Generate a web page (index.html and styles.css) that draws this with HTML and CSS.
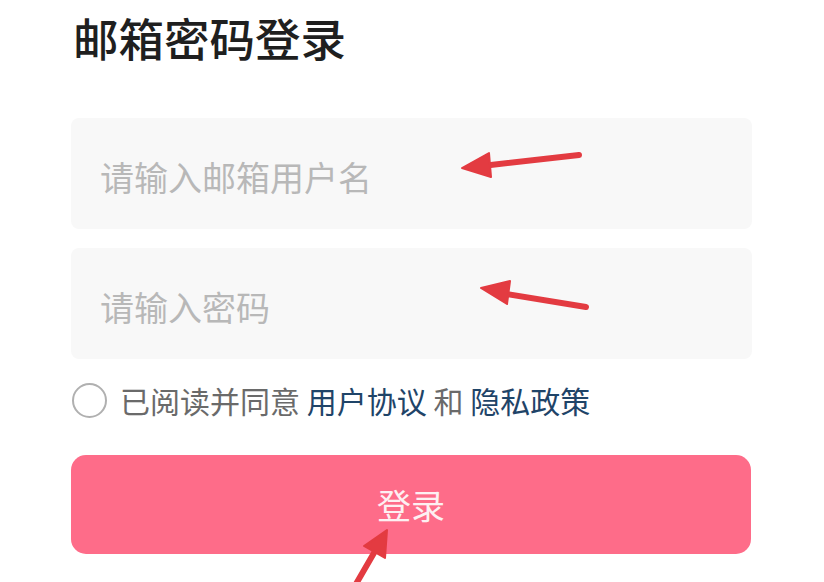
FILE: index.html
```html
<!DOCTYPE html>
<html lang="zh-CN">
<head>
  <meta charset="UTF-8">
  <meta name="viewport" content="width=device-width, initial-scale=1.0">
  <title>邮箱密码登录</title>
  <link rel="stylesheet" href="styles.css">
</head>
<body>

<div class="page">
  <h1>邮箱密码登录</h1>

  <!-- email + password fields -->
  <div class="field">
    <input type="text" placeholder="请输入邮箱用户名">
  </div>
  <div class="field">
    <input type="password" placeholder="请输入密码">
  </div>

  <!-- agreement -->
  <label class="agree">
    <span class="radio"></span>
    <span>已阅读并同意 <a href="#">用户协议</a> 和 <a href="#">隐私政策</a></span>
  </label>

  <button class="login">登录</button>

  <!-- red annotation arrows drawn over the screenshot -->
  <svg class="marks" width="824" height="582" viewBox="0 0 824 582">
    <g fill="#e33b41" stroke="#e33b41" stroke-linecap="round" stroke-linejoin="round">
      <line x1="579" y1="155" x2="482" y2="166" stroke-width="6"/>
      <polygon points="462,168 489,153 491,177" stroke-width="2"/>

      <line x1="586" y1="307" x2="500" y2="293" stroke-width="6"/>
      <polygon points="481,288 510,281 507,304" stroke-width="2"/>

      <line x1="356" y1="584" x2="378" y2="546" stroke-width="6"/>
      <polygon points="387,530 385,558 364,546" stroke-width="2"/>
    </g>
  </svg>
</div>

</body>
</html>
```

FILE: styles.css
```css
body {
  margin: 0;
  background-color: #fff;
  font-family: "Noto Sans CJK SC", "Noto Sans", sans-serif;
}
.page {
  position: relative;
  width: 824px;
  height: 582px;
  box-sizing: border-box;
  padding: 11px 72px 0 71px;
  overflow: hidden;
}
h1 {
  margin: 0 0 54px 2px;
  font-size: 45.5px;
  line-height: 53px;
  font-weight: 500;
  color: #1f1f1f;
}
.field {
  height: 111px;
  margin-bottom: 19px;
  background-color: #f8f8f8;
  border-radius: 8px;
}
.field input {
  width: 100%;
  height: 100%;
  box-sizing: border-box;
  padding: 6px 28px 0 29px;
  border: none;
  outline: none;
  background: transparent;
  font-family: inherit;
  font-size: 34px;
  color: #333;
}
.field input::placeholder {
  color: #b8b8b8;
}
.agree {
  display: flex;
  align-items: center;
  gap: 13px;
  margin: 4px 0 0 1px;
  height: 44px;
  font-size: 30px;
  color: #6a6a6a;
}
.radio {
  width: 31px;
  height: 31px;
  border: 2.5px solid #b0b0b0;
  border-radius: 50%;
}
.agree a {
  color: #1f4468;
  text-decoration: none;
}
.login {
  display: block;
  width: 680px;
  height: 99px;
  margin-top: 33px;
  border: none;
  border-radius: 15px;
  background-color: #fe6c89;
  font-family: inherit;
  font-size: 34px;
  color: #fdf0f2;
}
.marks {
  position: absolute;
  left: 0;
  top: 0;
  pointer-events: none;
}
```
